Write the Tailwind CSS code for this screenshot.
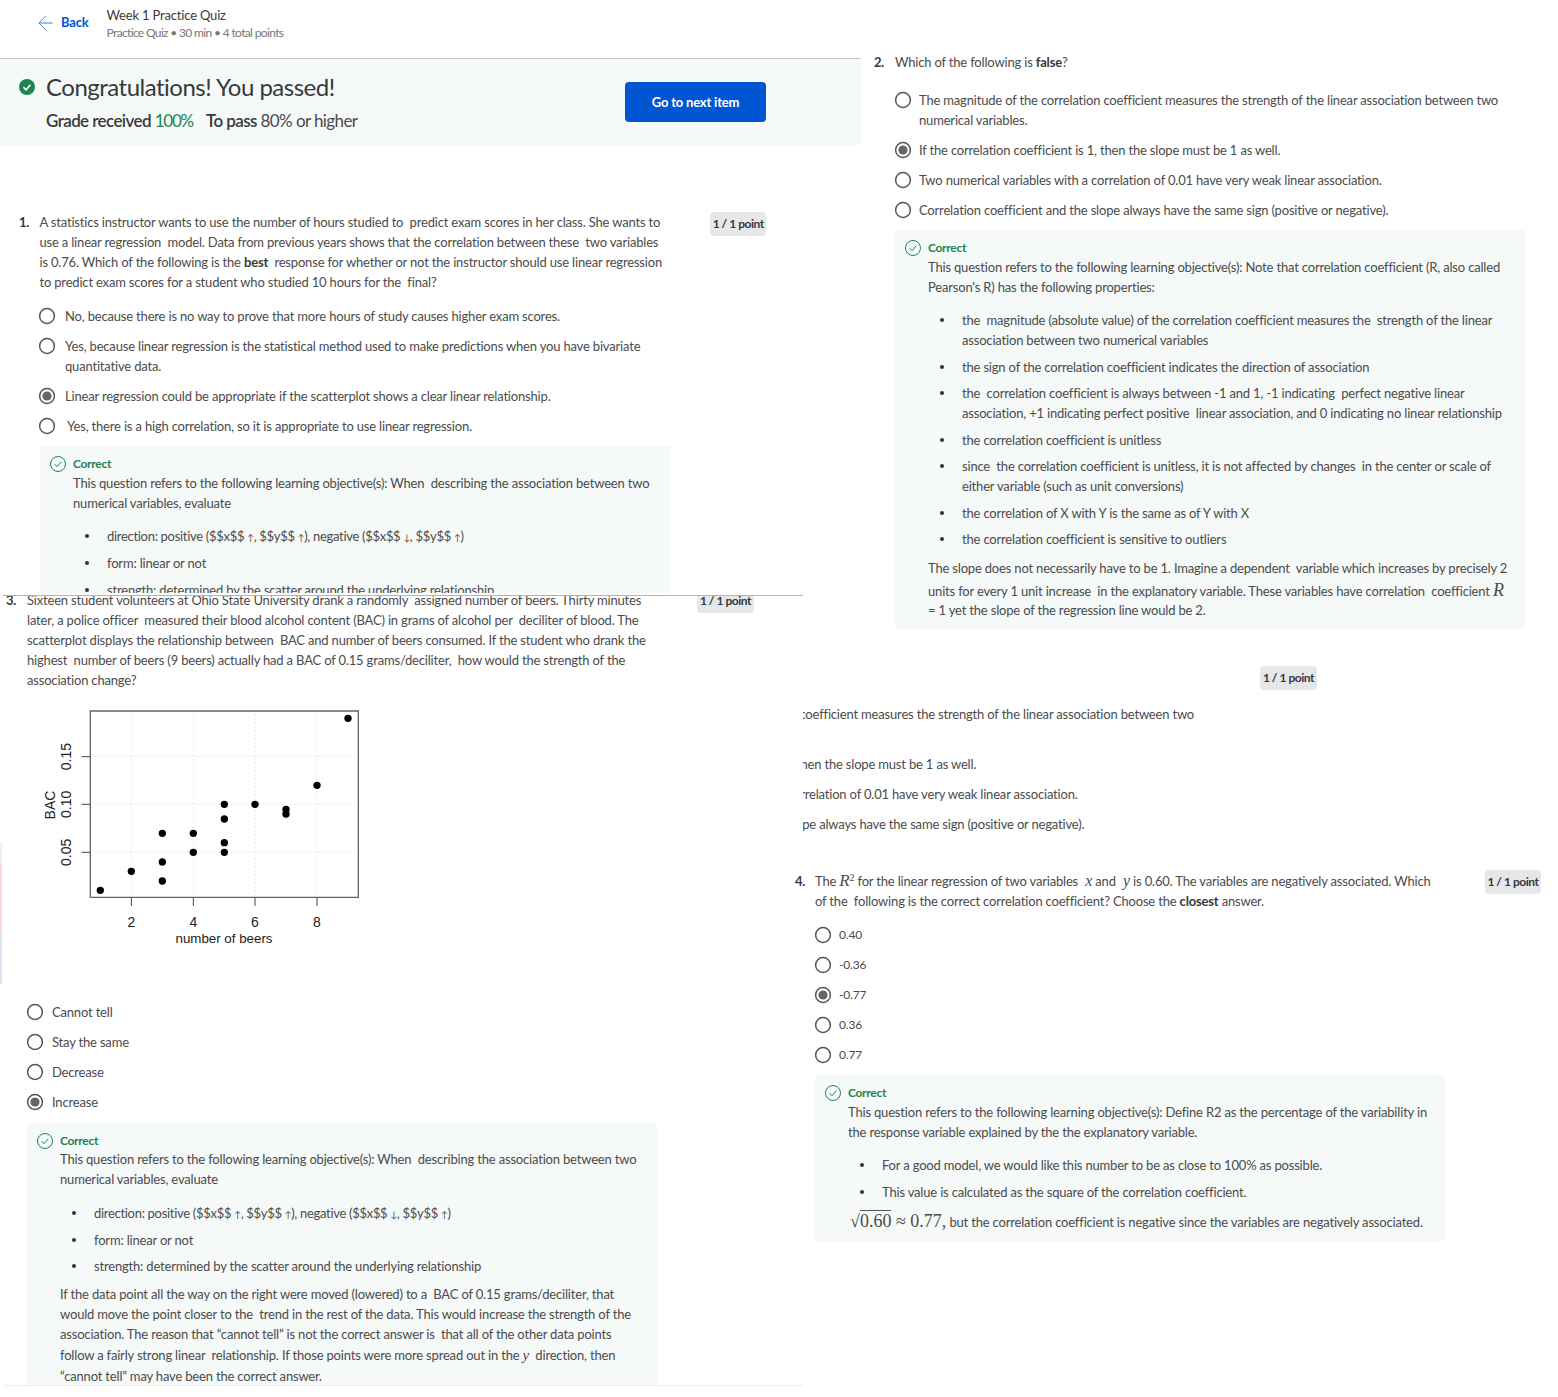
<!DOCTYPE html>
<html lang="en">
<head>
<meta charset="UTF-8">
<title>Week 1 Practice Quiz</title>
<script src="https://cdn.jsdelivr.net/npm/@tailwindcss/browser@4"></script>
</head>
<body class="bg-white font-['Lato',sans-serif] text-[13px] leading-5 tracking-[-0.18px] text-[#4b4b4b]">
<svg class="hidden">
  <symbol id="off" viewBox="0 0 18 18"><circle cx="9" cy="9" r="7.4" fill="none" stroke="#555" stroke-width="1.5"/></symbol>
  <symbol id="on" viewBox="0 0 18 18"><circle cx="9" cy="9" r="7.4" fill="none" stroke="#555" stroke-width="1.5"/><circle cx="9" cy="9" r="4.6" fill="#666"/></symbol>
  <symbol id="ok" viewBox="0 0 18 18"><circle cx="9" cy="9" r="7.5" fill="none" stroke="#1f8354"/><path d="M5.7 9.2l2.3 2.5 4.4-5" fill="none" stroke="#1f8354"/></symbol>
</svg>
<div class="relative w-[1558px] h-[1397px] overflow-hidden">

  <!-- page header and result banner -->
  <div class="absolute left-0 top-0 w-[861px]">
    <div class="flex items-start h-[58px] border-b border-[#c4c4c4] pl-[38px] box-content">
      <svg class="mt-[15px] w-[15px] h-[16px]" viewBox="0 0 15 16"><path d="M14.5 8H1M8 .8L.9 8 8 15.2" fill="none" stroke="#3a7ddc"/></svg>
      <span class="mt-[12px] ml-2 font-bold text-[#0056d2]">Back</span>
      <div class="ml-[18px] mt-[6px]">
        <div class="h-[18px] leading-[18px] text-[#373a3c]">Week 1 Practice Quiz</div>
        <div class="h-[18px] leading-[18px] text-[12px] tracking-[-0.65px] text-[#777]">Practice Quiz • 30 min • 4 total points</div>
      </div>
    </div>
    <div class="flex h-[86px] bg-[#f5f9f8] pl-[19px]">
      <svg class="w-4 h-4 mt-5" viewBox="0 0 16 16"><circle cx="8" cy="8" r="8" fill="#1f8354"/><path d="M4.5 8.3l2.5 2.5 4.5-5" fill="none" stroke="#fff" stroke-width="1.6"/></svg>
      <div class="ml-[11px] w-[579px]">
        <div class="mt-[12px] h-8 leading-8 text-[24px] tracking-[-0.5px] text-[#373a3c]">Congratulations! You passed!</div>
        <div class="mt-[6px] h-6 leading-6 text-[17px] tracking-[-0.6px]"><b class="font-semibold text-[#373a3c]">Grade received</b> <span class="text-[#1f8354] tracking-[-1.2px]">100%</span><b class="ml-[13px] font-semibold text-[#373a3c]">To pass</b> 80% or higher</div>
      </div>
      <div class="mt-[23px] flex items-center justify-center w-[141px] h-10 rounded-sm bg-[#0056d2] font-bold text-white">Go to next item</div>
    </div>
  </div>

  <!-- question 1 -->
  <div class="absolute left-[19px] top-[212px] w-[747px]">
    <div class="flex">
      <div class="w-[21px] font-bold text-[#373a3c]">1.</div>
      <div class="w-[650px] whitespace-nowrap">
        <div>A statistics instructor wants to use the number of hours studied to&nbsp; predict exam scores in her class. She wants to</div>
        <div>use a linear regression&nbsp; model. Data from previous years shows that the correlation between these&nbsp; two variables</div>
        <div>is 0.76. Which of the following is the <b class="text-[#373a3c]">best</b>&nbsp; response for whether or not the instructor should use linear regression</div>
        <div>to predict exam scores for a student who studied 10 hours for the&nbsp; final?</div>
      </div>
      <div class="ml-[38px] flex items-center justify-center w-[57px] h-6 rounded bg-[#e6e7e8] text-[12px] tracking-[-0.45px] font-bold text-[#373a3c]">1 / 1 point</div>
    </div>
    <div class="ml-[19px] mt-[14px] flex flex-col gap-[10px] whitespace-nowrap">
      <div class="flex gap-[9px]"><svg class="w-[18px] h-5"><use href="#off"/></svg><div>No, because there is no way to prove that more hours of study causes higher exam scores.</div></div>
      <div class="flex gap-[9px]"><svg class="w-[18px] h-5"><use href="#off"/></svg><div>Yes, because linear regression is the statistical method used to make predictions when you have bivariate<br>quantitative data.</div></div>
      <div class="flex gap-[9px]"><svg class="w-[18px] h-5"><use href="#on"/></svg><div>Linear regression could be appropriate if the scatterplot shows a clear linear relationship.</div></div>
      <div class="flex gap-[11px]"><svg class="w-[18px] h-5"><use href="#off"/></svg><div>Yes, there is a high correlation, so it is appropriate to use linear regression.</div></div>
    </div>
    <div class="ml-[21px] mt-[10px] w-[630px] h-[147px] overflow-hidden bg-[#f5f9f8] whitespace-nowrap">
      <div class="flex items-center gap-[6px] pl-[9px] pt-2 h-[28px]"><svg class="w-[18px] h-[18px]"><use href="#ok"/></svg><span class="text-[12px] tracking-[-0.3px] font-bold text-[#1f8354]">Correct</span></div>
      <div class="pl-[33px] mt-[-1px]">This question refers to the following learning objective(s): When&nbsp; describing the association between two<br>numerical variables, evaluate</div>
      <ul class="mt-[13px] ml-[67px] flex flex-col gap-[7px] [&>li]:relative [&>li]:before:absolute [&>li]:before:content-[''] [&>li]:before:-left-[22px] [&>li]:before:top-2 [&>li]:before:w-1 [&>li]:before:h-1 [&>li]:before:rounded-full [&>li]:before:bg-[#333]">
        <li class="h-5 tracking-[-0.3px]">direction: positive ($$x$$ <span class="text-[9px]">↑</span>, $$y$$ <span class="text-[9px]">↑</span>), negative ($$x$$ <span class="text-[9px]">↓</span>, $$y$$ <span class="text-[9px]">↑</span>)</li>
        <li>form: linear or not</li>
        <li>strength: determined by the scatter around the underlying relationship</li>
      </ul>
    </div>
  </div>

  <!-- question 2 -->
  <div class="absolute left-[874px] top-[52px] w-[651px]">
    <div class="flex"><div class="w-[21px] font-bold text-[#373a3c]">2.</div><div>Which of the following is <b class="text-[#373a3c]">false</b>?</div></div>
    <div class="ml-[20px] mt-[18px] flex flex-col gap-[10px] whitespace-nowrap">
      <div class="flex gap-[7px]"><svg class="w-[18px] h-5"><use href="#off"/></svg><div>The magnitude of the correlation coefficient measures the strength of the linear association between two<br>numerical variables.</div></div>
      <div class="flex gap-[7px]"><svg class="w-[18px] h-5"><use href="#on"/></svg><div>If the correlation coefficient is 1, then the slope must be 1 as well.</div></div>
      <div class="flex gap-[7px]"><svg class="w-[18px] h-5"><use href="#off"/></svg><div>Two numerical variables with a correlation of 0.01 have very weak linear association.</div></div>
      <div class="flex gap-[7px]"><svg class="w-[18px] h-5"><use href="#off"/></svg><div>Correlation coefficient and the slope always have the same sign (positive or negative).</div></div>
    </div>
    <div class="ml-[21px] mt-[10px] w-[630px] h-[399px] bg-[#f5f9f8] whitespace-nowrap">
      <div class="flex items-center gap-[6px] pl-[9px] pt-2 h-[28px]"><svg class="w-[18px] h-[18px]"><use href="#ok"/></svg><span class="text-[12px] tracking-[-0.3px] font-bold text-[#1f8354]">Correct</span></div>
      <div class="pl-[33px] mt-[-1px]">This question refers to the following learning objective(s): Note that correlation coefficient (R, also called<br>Pearson's R) has the following properties:</div>
      <ul class="mt-[13px] ml-[67px] flex flex-col gap-[6.5px] [&>li]:relative [&>li]:before:absolute [&>li]:before:content-[''] [&>li]:before:-left-[22px] [&>li]:before:top-2 [&>li]:before:w-1 [&>li]:before:h-1 [&>li]:before:rounded-full [&>li]:before:bg-[#333]">
        <li>the&nbsp; magnitude (absolute value) of the correlation coefficient measures the&nbsp; strength of the linear<br>association between two numerical variables</li>
        <li>the sign of the correlation coefficient indicates the direction of association</li>
        <li>the&nbsp; correlation coefficient is always between -1 and 1, -1 indicating&nbsp; perfect negative linear<br>association, +1 indicating perfect positive&nbsp; linear association, and 0 indicating no linear relationship</li>
        <li>the correlation coefficient is unitless</li>
        <li>since&nbsp; the correlation coefficient is unitless, it is not affected by changes&nbsp; in the center or scale of<br>either variable (such as unit conversions)</li>
        <li>the correlation of X with Y is the same as of Y with X</li>
        <li>the correlation coefficient is sensitive to outliers</li>
      </ul>
      <div class="pl-[33px] mt-[9px]">
        <div>The slope does not necessarily have to be 1. Imagine a dependent&nbsp; variable which increases by precisely 2</div>
        <div class="mt-[2px] h-5">units for every 1 unit increase&nbsp; in the explanatory variable. These variables have correlation&nbsp; coefficient <i class="font-['Liberation_Serif',serif] text-[18px]">R</i></div>
        <div>= 1 yet the slope of the regression line would be 2.</div>
      </div>
    </div>
  </div>

  <!-- question 2 again, cut off by question 3 -->
  <div class="absolute left-[803px] top-[666px] w-[520px] overflow-hidden">
    <div class="flex justify-end"><div class="mr-[6px] flex items-center justify-center w-[57px] h-6 rounded bg-[#e6e7e8] text-[12px] tracking-[-0.45px] font-bold text-[#373a3c]">1 / 1 point</div></div>
    <div class="ml-[-188px] mt-[14px] flex flex-col gap-[10px] whitespace-nowrap">
      <div class="h-10">The magnitude of the correlation coefficient measures the strength of the linear association between two</div>
      <div>If the correlation coefficient is 1, then the slope must be 1 as well.</div>
      <div>Two numerical variables with a correlation of 0.01 have very weak linear association.</div>
      <div>Correlation coefficient and the slope always have the same sign (positive or negative).</div>
    </div>
  </div>

  <!-- stray strip of another window at the left edge -->
  <div class="absolute left-0 top-[842px] w-[2px] flex flex-col">
    <div class="h-[21px] bg-[#f1f1f1]"></div>
    <div class="h-[70px] bg-[#fadcd6]"></div>
    <div class="h-[51px] bg-[#d6e5f1]"></div>
  </div>

  <!-- question 3 -->
  <div class="absolute left-[3px] top-[595px] w-[800px] h-[791px] overflow-hidden bg-white border-y border-t-[#b4b4b4] border-b-[#eeeeee]">
    <div class="-mt-[6px] flex whitespace-nowrap">
      <div class="ml-[3px] w-[21px] font-bold text-[#373a3c]">3.</div>
      <div class="w-[670px]">
        <div>Sixteen student volunteers at Ohio State University drank a randomly&nbsp; assigned number of beers. Thirty minutes</div>
        <div>later, a police officer&nbsp; measured their blood alcohol content (BAC) in grams of alcohol per&nbsp; deciliter of blood. The</div>
        <div>scatterplot displays the relationship between&nbsp; BAC and number of beers consumed. If the student who drank the</div>
        <div>highest&nbsp; number of beers (9 beers) actually had a BAC of 0.15 grams/deciliter,&nbsp; how would the strength of the</div>
        <div>association change?</div>
      </div>
      <div class="-mt-[1px] flex items-center justify-center w-[57px] h-6 rounded bg-[#e6e7e8] text-[12px] tracking-[-0.45px] font-bold text-[#373a3c]">1 / 1 point</div>
    </div>
    <svg class="-ml-[3px] mt-[10px] block w-[400px] h-[300px] tracking-normal" viewBox="0 0 1200 900" font-family="'Liberation Sans',sans-serif" font-size="42" fill="#222">
      <g stroke="#ddd" stroke-width="3" stroke-dasharray="3 9">
        <path d="M394 33V592M580 33V592M765 33V592M951 33V592M271 170H1075M271 313H1075M271 457H1075"/>
      </g>
      <path d="M271 33H1075V592H271Z" fill="none" stroke="#666" stroke-width="4"/>
      <path d="M245 170H271M245 313H271M245 457H271M394 592V618M580 592V618M765 592V618M951 592V618" fill="none" stroke="#444" stroke-width="3"/>
      <g fill="#000">
        <circle cx="301" cy="571" r="11"/><circle cx="394" cy="514" r="11"/><circle cx="487" cy="543" r="11"/><circle cx="487" cy="486" r="11"/>
        <circle cx="487" cy="400" r="11"/><circle cx="580" cy="457" r="11"/><circle cx="580" cy="400" r="11"/><circle cx="673" cy="457" r="11"/>
        <circle cx="673" cy="428" r="11"/><circle cx="673" cy="357" r="11"/><circle cx="673" cy="313" r="11"/><circle cx="765" cy="313" r="11"/>
        <circle cx="858" cy="342" r="11"/><circle cx="858" cy="328" r="11"/><circle cx="951" cy="256" r="11"/><circle cx="1044" cy="55" r="11"/>
      </g>
      <g text-anchor="middle">
        <text x="394" y="682">2</text><text x="580" y="682">4</text><text x="765" y="682">6</text><text x="951" y="682">8</text>
        <text x="672" y="730" font-size="40">number of beers</text>
        <text transform="translate(213 170) rotate(-90)">0.15</text>
        <text transform="translate(213 313) rotate(-90)">0.10</text>
        <text transform="translate(213 457) rotate(-90)">0.05</text>
        <text transform="translate(165 315) rotate(-90)">BAC</text>
      </g>
    </svg>
    <div class="ml-[23px] mt-[2px] flex flex-col gap-[10px] whitespace-nowrap">
      <div class="flex gap-[8px]"><svg class="w-[18px] h-5"><use href="#off"/></svg><div>Cannot tell</div></div>
      <div class="flex gap-[8px]"><svg class="w-[18px] h-5"><use href="#off"/></svg><div>Stay the same</div></div>
      <div class="flex gap-[8px]"><svg class="w-[18px] h-5"><use href="#off"/></svg><div>Decrease</div></div>
      <div class="flex gap-[8px]"><svg class="w-[18px] h-5"><use href="#on"/></svg><div>Increase</div></div>
    </div>
    <div class="ml-[24px] mt-[11px] w-[630px] h-[262px] bg-[#f5f9f8] whitespace-nowrap">
      <div class="flex items-center gap-[6px] pl-[9px] pt-2 h-[28px]"><svg class="w-[18px] h-[18px]"><use href="#ok"/></svg><span class="text-[12px] tracking-[-0.3px] font-bold text-[#1f8354]">Correct</span></div>
      <div class="pl-[33px] mt-[-2px]">This question refers to the following learning objective(s): When&nbsp; describing the association between two<br>numerical variables, evaluate</div>
      <ul class="mt-[14px] ml-[67px] flex flex-col gap-[6.5px] [&>li]:relative [&>li]:before:absolute [&>li]:before:content-[''] [&>li]:before:-left-[22px] [&>li]:before:top-2 [&>li]:before:w-1 [&>li]:before:h-1 [&>li]:before:rounded-full [&>li]:before:bg-[#333]">
        <li class="h-5 tracking-[-0.3px]">direction: positive ($$x$$ <span class="text-[9px]">↑</span>, $$y$$ <span class="text-[9px]">↑</span>), negative ($$x$$ <span class="text-[9px]">↓</span>, $$y$$ <span class="text-[9px]">↑</span>)</li>
        <li>form: linear or not</li>
        <li>strength: determined by the scatter around the underlying relationship</li>
      </ul>
      <div class="pl-[33px] mt-[8px]">
        <div>If the data point all the way on the right were moved (lowered) to a&nbsp; BAC of 0.15 grams/deciliter, that</div>
        <div>would move the point closer to the&nbsp; trend in the rest of the data. This would increase the strength of the</div>
        <div>association. The reason that “cannot tell” is not the correct answer is&nbsp; that all of the other data points</div>
        <div class="mt-[1px]">follow a fairly strong linear&nbsp; relationship. If those points were more spread out in the <i class="font-['Liberation_Serif',serif] text-[15px]">y</i>&nbsp; direction, then</div>
        <div class="mt-[1px]">“cannot tell” may have been the correct answer.</div>
      </div>
    </div>
  </div>

  <!-- question 4 -->
  <div class="absolute left-[795px] top-[871px] w-[746px]">
    <div class="flex whitespace-nowrap">
      <div class="w-[20px] font-bold text-[#373a3c]">4.</div>
      <div class="w-[670px]">
        <div class="h-5">The <i class="font-['Liberation_Serif',serif] text-[17px]">R</i><sup class="font-['Liberation_Serif',serif] text-[10px]">2</sup> for the linear regression of two variables <i class="ml-[4px] font-['Liberation_Serif',serif] text-[16px]">x</i> and&nbsp; <i class="ml-[1px] font-['Liberation_Serif',serif] text-[16px]">y</i> is 0.60. The variables are negatively associated. Which</div>
        <div>of the&nbsp; following is the correct correlation coefficient? Choose the <b class="text-[#373a3c]">closest</b> answer.</div>
      </div>
      <div class="-mt-[1px] flex items-center justify-center w-[56px] h-6 rounded bg-[#e6e7e8] text-[12px] tracking-[-0.45px] font-bold text-[#373a3c]">1 / 1 point</div>
    </div>
    <div class="ml-[19px] mt-[14px] flex flex-col gap-[10px] whitespace-nowrap text-[12px]">
      <div class="flex gap-[7px]"><svg class="w-[18px] h-5"><use href="#off"/></svg><div>0.40</div></div>
      <div class="flex gap-[7px]"><svg class="w-[18px] h-5"><use href="#off"/></svg><div>-0.36</div></div>
      <div class="flex gap-[7px]"><svg class="w-[18px] h-5"><use href="#on"/></svg><div>-0.77</div></div>
      <div class="flex gap-[7px]"><svg class="w-[18px] h-5"><use href="#off"/></svg><div>0.36</div></div>
      <div class="flex gap-[7px]"><svg class="w-[18px] h-5"><use href="#off"/></svg><div>0.77</div></div>
    </div>
    <div class="ml-[20px] mt-[10px] w-[630px] h-[166px] bg-[#f5f9f8] whitespace-nowrap">
      <div class="flex items-center gap-[6px] pl-[9px] pt-2 h-[28px]"><svg class="w-[18px] h-[18px]"><use href="#ok"/></svg><span class="text-[12px] tracking-[-0.3px] font-bold text-[#1f8354]">Correct</span></div>
      <div class="pl-[33px] mt-[-1px]">This question refers to the following learning objective(s): Define R2 as the percentage of the variability in<br>the response variable explained by the the explanatory variable.</div>
      <ul class="mt-[13px] ml-[67px] flex flex-col gap-[7px] [&>li]:relative [&>li]:before:absolute [&>li]:before:content-[''] [&>li]:before:-left-[22px] [&>li]:before:top-2 [&>li]:before:w-1 [&>li]:before:h-1 [&>li]:before:rounded-full [&>li]:before:bg-[#333]">
        <li>For a good model, we would like this number to be as close to 100% as possible.</li>
        <li>This value is calculated as the square of the correlation coefficient.</li>
      </ul>
      <div class="pl-[35px] mt-[9px] h-5"><span class="font-['Liberation_Serif',serif] text-[18px] tracking-normal">√<span class="border-t border-[#555]">0.60</span> ≈ 0.77,</span> but the correlation coefficient is negative since the variables are negatively associated.</div>
    </div>
  </div>

</div>
</body>
</html>
